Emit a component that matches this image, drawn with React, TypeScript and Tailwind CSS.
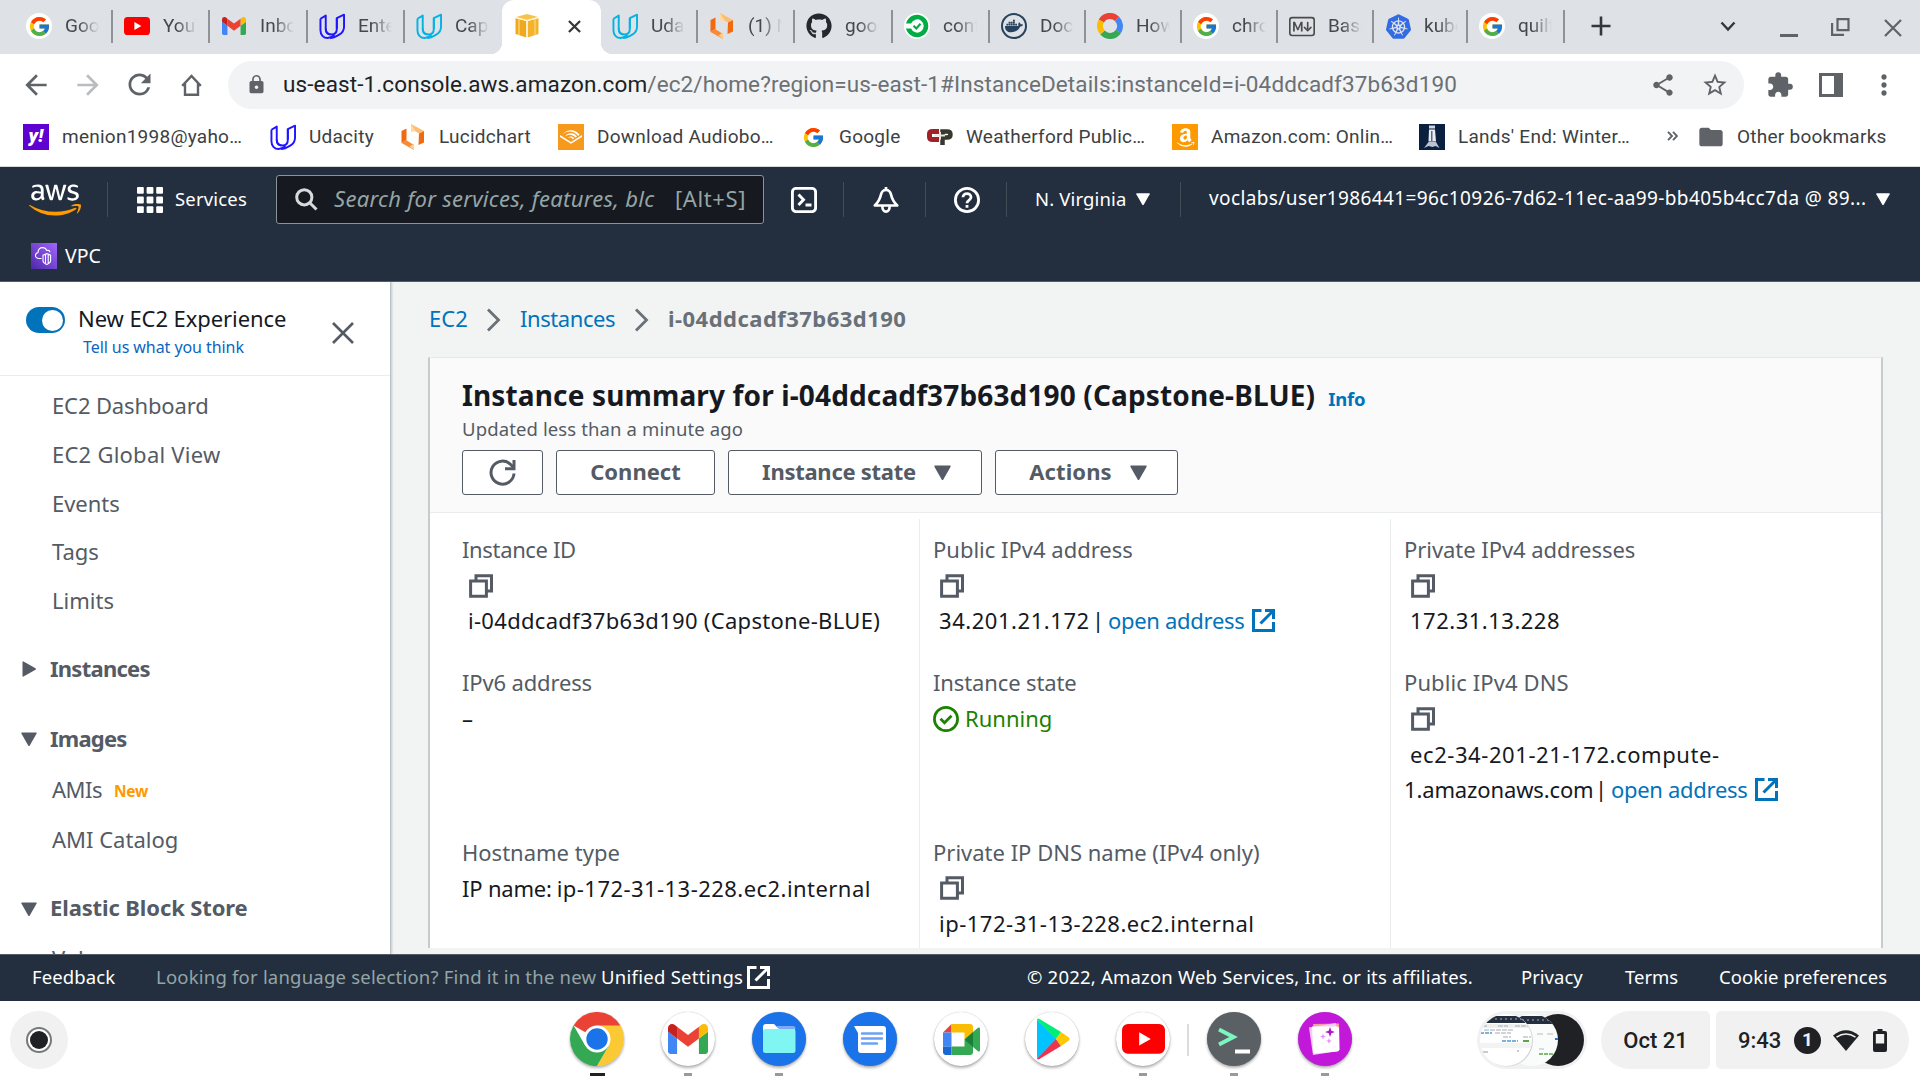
import React, { ReactNode } from "react";
import { FcGoogle } from "react-icons/fc";
import { FaGithub, FaAws, FaDocker, FaAudible, FaAmazon } from "react-icons/fa";
import { MdExtension, MdShare, MdStarBorder, MdLock, MdRefresh, MdArrowBack, MdArrowForward, MdMoreVert, MdFolder } from "react-icons/md";
import { BsMarkdown } from "react-icons/bs";
import { SiKubernetes } from "react-icons/si";

/* ---------- Brand icons ---------- */

function GoogleDisc() {
  return (
    <span className="flex size-[26px] items-center justify-center rounded-full bg-white">
      <FcGoogle size={23} />
    </span>
  );
}

function YouTubeMark({ width }: { width: number }) {
  return (
    <svg width={width} viewBox="0 0 26 18">
      <rect width="26" height="18" rx="3.6" fill="#f00" />
      <path d="M10.4 5v8l7-4z" fill="#fff" />
    </svg>
  );
}

function GmailMark({ width }: { width: number }) {
  return (
    <svg width={width} viewBox="52 42 88 66">
      <path fill="#4285f4" d="M58 108h14V74L52 59v43c0 3.32 2.69 6 6 6" />
      <path fill="#34a853" d="M120 108h14c3.32 0 6-2.69 6-6V59l-20 15" />
      <path fill="#fbbc04" d="M120 48v26l20-15v-8c0-7.42-8.47-11.65-14.4-7.2" />
      <path fill="#ea4335" d="M72 74V48l24 18 24-18v26L96 92" />
      <path fill="#c5221f" d="M52 51v8l20 15V48l-5.6-4.2c-5.94-4.45-14.4-.22-14.4 7.2" />
    </svg>
  );
}

function UdacityMark({ color }: { color: string }) {
  return (
    <svg width="27" height="27" viewBox="0 0 27 27" fill="none" stroke={color} strokeWidth="2" strokeLinejoin="round">
      <path d="M1.5 5.5 7 2.200v13.600c0 3.400 1.800 5.600 4.800 6 M1.500 5.500v12c0 4.600 3 8 7.500 8 2.500 0 5-1.200 7-3.200" />
      <path d="M7 15.500c0 4 2.300 6.300 6 6.300 3.500 0 5.500-2 5.500-6V4.700L26 1.200v12.600c0 4-2 6.500-5 8.200-3 1.800-6 3.500-9.500 3.500" />
      <path d="M18.500 4.700v11" />
    </svg>
  );
}

function LucidMark() {
  return (
    <svg width="26" height="26" viewBox="0 0 26 26">
      <path d="M1.500 7 6.500 4.500V16l-5 3z" fill="#f26a10" />
      <path d="M1.500 19l4.500-3 8 5v5z" fill="#f98a35" />
      <path d="M9.500 22.500 14 19.500V26z" fill="#ffcf8a" />
      <path d="M11 0 24 7l-5 2.500-8-4.500z" fill="#fdbd72" />
      <path d="M11 0v8l4.500-1z" fill="#ffd9a0" />
      <path d="M19 9.500 24 7v11.500L18.500 21z" fill="#f26a10" />
    </svg>
  );
}

function CubeMark() {
  return (
    <svg width="26" height="26" viewBox="0 0 26 26">
      <path d="M2 4 13 1l11 3-11 3z" fill="#f8c24a" />
      <path d="M1.500 5 12.300 8v16.500L1.500 21z" fill="#f0a91f" />
      <path d="M24.500 5 13.700 8v16.500l10.800-3.500z" fill="#f5b32c" />
      <path d="M5 6v16M21 6v16" stroke="#fbd98a" strokeWidth="1.200" />
      <path d="M2 4.600 13 7.700l11-3.100M13 7.700V24" stroke="#fff3d0" strokeWidth="1.200" fill="none" />
    </svg>
  );
}

function CircleCiMark() {
  return (
    <svg width="26" height="26" viewBox="0 0 26 26">
      <circle cx="13" cy="13" r="13" fill="#fff" />
      <path d="M2 10.500A11.300 11.300 0 1 1 2 15.500h5A6.600 6.600 0 1 0 7 10.500z" fill="#00ad45" />
      <path d="M9.500 12.800l2.800 2.700L16.500 10.800" stroke="#00ad45" strokeWidth="2.200" fill="none" />
    </svg>
  );
}

function DockerMark() {
  return (
    <span className="flex size-[26px] items-center justify-center rounded-full border-2 border-[#27425c] bg-[#dee1e6]">
      <FaDocker size={18} color="#27425c" />
    </span>
  );
}

function RingMark() {
  return (
    <svg width="26" height="26" viewBox="0 0 26 26" fill="none" strokeWidth="6">
      <path d="M4.300 8A10 10 0 0 1 20 5.900" stroke="#ea4335" />
      <path d="M20 5.900A10 10 0 0 1 21.500 18.300" stroke="#4285f4" />
      <path d="M21.500 18.300A10 10 0 0 1 5.500 19.600" stroke="#34a853" />
      <path d="M5.500 19.600A10 10 0 0 1 4.300 8" stroke="#fbbc04" />
    </svg>
  );
}

function YahooMark() {
  return (
    <span className="flex size-[26px] items-center justify-center bg-[#5f01d1] pb-1 font-[Roboto] text-[19px] leading-none font-black text-white italic">
      y!
    </span>
  );
}

function CpMark() {
  return (
    <svg width="26" height="18" viewBox="0 0 26 18" fill="none">
      <path d="M12 3.500H5.500Q2.500 3.500 2.500 6v3q0 2.500 3 2.500H12" stroke="#a02126" strokeWidth="5" />
      <path d="M15.500 17V3.500H20q3.500 0 3.500 3t-3.500 3h-4" stroke="#37392f" strokeWidth="4.500" />
      <path d="M7 7.500h11M13 4v7.500" stroke="#e9e4e2" strokeWidth="2" />
    </svg>
  );
}

function LighthouseMark() {
  return (
    <svg width="26" height="26" viewBox="0 0 26 26">
      <rect width="26" height="26" fill="#0b1f3f" />
      <path d="M10 1.500h6v3h-6z" fill="#cfd6df" />
      <path d="M10 5.500h6l1 12H9.500z" fill="#e8ecf1" />
      <path d="M12 7h1.500v10H12z" fill="#5b6b83" />
      <path d="M5 24l4.500-6h7.500l3.500 6-4-2-3 1-4-1z" fill="#b9c3d1" />
    </svg>
  );
}

/* ---------- Console icons ---------- */

function ExternalIcon() {
  return (
    <svg width="23" height="23" viewBox="0 0 23 23" fill="none" stroke="currentColor" strokeWidth="3">
      <path d="M9.500 1.500h-8v20h20v-8.500M13 1.500h8.500V10M21 2 8.500 14.500" />
    </svg>
  );
}

function CopyIcon() {
  return (
    <svg width="24" height="24" viewBox="0 0 24 24" fill="none" stroke="#545b64" strokeWidth="3">
      <path d="M7 6.500V1.800h15.500V17H18" />
      <path d="M1.600 7h15.800v15.200H1.600z" />
    </svg>
  );
}

function Triangle({ className, size = 16 }: { className: string; size?: number }) {
  return (
    <svg className={className} width={size} height={size} viewBox="0 0 16 16" fill="currentColor">
      <path d="M1 1.500h14q1 0 .6 1l-6.800 12q-.8 1-1.600 0L.4 2.500q-.4-1 .6-1z" />
    </svg>
  );
}

function Chevron() {
  return (
    <svg width="15" height="24" viewBox="0 0 15 24" fill="none" stroke="#687078" strokeWidth="2.800">
      <path d="M2 1.500 12.500 12 2 22.500" />
    </svg>
  );
}

/* ---------- Browser chrome ---------- */

const tabs: { icon: ReactNode; label: string; width: string; sep: boolean }[] = [
  { icon: <GoogleDisc />, label: "Google", width: "w-[113px] pl-[26px]", sep: true },
  { icon: <YouTubeMark width={26} />, label: "YouTube", width: "w-[97px] pl-[11px]", sep: true },
  { icon: <GmailMark width={24} />, label: "Inbox", width: "w-[98px] pl-[11px]", sep: true },
  { icon: <UdacityMark color="#2015ff" />, label: "Enterprise", width: "w-[97px] pl-[11px]", sep: true },
  { icon: <UdacityMark color="#02b3e4" />, label: "Capstone", width: "w-[97px] pl-[11px]", sep: false },
];

const tabsAfter: { icon: ReactNode; label: string; width: string }[] = [
  { icon: <UdacityMark color="#02b3e4" />, label: "Udacity", width: "w-[97px]" },
  { icon: <LucidMark />, label: "(1) New", width: "w-[97px]" },
  { icon: <FaGithub size={26} color="#24292f" />, label: "google", width: "w-[98px]" },
  { icon: <CircleCiMark />, label: "config", width: "w-[97px]" },
  { icon: <DockerMark />, label: "Docker", width: "w-[96px]" },
  { icon: <RingMark />, label: "How to", width: "w-[96px]" },
  { icon: <GoogleDisc />, label: "chrome", width: "w-[96px]" },
  { icon: <BsMarkdown size={27} color="#4b4b4b" />, label: "Basic", width: "w-[96px]" },
  { icon: <SiKubernetes size={25} color="#326ce5" />, label: "kubectl", width: "w-[94px]" },
  { icon: <GoogleDisc />, label: "quilt", width: "w-[97px]" },
];

function TabLabel({ text }: { text: string }) {
  return (
    <span className="ml-[13px] w-[34px] shrink-0 overflow-hidden text-[19px] whitespace-nowrap text-[#45494d] [mask-image:linear-gradient(to_right,black_40%,transparent)]">
      {text}
    </span>
  );
}

function TabStrip() {
  return (
    <div className="flex h-[54px] shrink-0 bg-[#dee1e6]">
      {tabs.map((t, i) => (
        <div key={i} className={`flex shrink-0 items-center pb-[2px] ${t.width}`}>
          <span className="flex w-[26px] shrink-0 justify-center">{t.icon}</span>
          <TabLabel text={t.label} />
          {t.sep && <span className="ml-auto h-[33px] w-[2px] bg-[#8f9296]" />}
        </div>
      ))}
      <div className="relative flex w-[99px] shrink-0 items-center rounded-t-xl bg-white pb-[2px] pl-[12px]">
        <span className="absolute bottom-0 -left-3 size-3 bg-[radial-gradient(circle_at_top_left,#dee1e6_12px,white_12.500px)]" />
        <span className="absolute -right-3 bottom-0 size-3 bg-[radial-gradient(circle_at_top_right,#dee1e6_12px,white_12.500px)]" />
        <CubeMark />
        <svg className="ml-[28px]" width="13" height="13" viewBox="0 0 14 14" stroke="#33363a" strokeWidth="2.400">
          <path d="M1 1l12 12M13 1 1 13" />
        </svg>
      </div>
      {tabsAfter.map((t, i) => (
        <div key={i} className={`flex shrink-0 items-center pb-[2px] pl-[11px] ${t.width}`}>
          <span className="flex w-[26px] shrink-0 justify-center">{t.icon}</span>
          <TabLabel text={t.label} />
          <span className="ml-auto h-[33px] w-[2px] bg-[#8f9296]" />
        </div>
      ))}
      <div className="flex flex-1 items-center pb-[2px] pl-[26px]">
        <svg width="20" height="20" viewBox="0 0 20 20" stroke="#33363a" strokeWidth="2.600">
          <path d="M10 0.500v19M0.500 10h19" />
        </svg>
        <svg className="ml-[109px]" width="16" height="11" viewBox="0 0 16 11" fill="none" stroke="#33363a" strokeWidth="2.400">
          <path d="M1.500 1.500 8 8.500l6.500-7" />
        </svg>
        <svg className="mt-[18px] ml-[44px]" width="18" height="3" viewBox="0 0 18 3">
          <path d="M0 1.500h18" stroke="#5f6368" strokeWidth="3" />
        </svg>
        <svg className="mt-[2px] ml-[33px]" width="19" height="18" viewBox="0 0 19 18" fill="none" stroke="#5f6368" strokeWidth="2.200">
          <path d="M6.500 1.100h11v11h-11zM1.100 5v11.800H13" />
        </svg>
        <svg className="mt-[3px] ml-[34px]" width="18" height="18" viewBox="0 0 18 18" stroke="#5f6368" strokeWidth="2.200">
          <path d="M1 1l16 16M17 1 1 17" />
        </svg>
      </div>
    </div>
  );
}

function Toolbar() {
  return (
    <div className="flex h-[61px] shrink-0 items-center pl-[20px]">
      <MdArrowBack size={32} color="#5f6368" />
      <MdArrowForward className="ml-[20px]" size={32} color="#babcbe" />
      <MdRefresh className="ml-[19px]" size={33} color="#5f6368" />
      <svg className="ml-[25px]" width="21" height="22" viewBox="0 0 21 22" fill="none" stroke="#5f6368" strokeWidth="2.400">
        <path d="M1.200 11.800 10.500 2l9.300 9.800M4 9.500v11.200h13V9.500" />
      </svg>
      <div className="ml-[26px] flex h-[48px] w-[1516px] items-center rounded-full bg-[#f1f3f4] pr-[15px] pl-[18px]">
        <MdLock size={21} color="#5f6368" />
        <span className="ml-[16px] text-[22.5px] tracking-[0.12px] whitespace-nowrap text-[#6c7075]">
          <span className="text-[#202124]">us-east-1.console.aws.amazon.com</span>
          /ec2/home?region=us-east-1#InstanceDetails:instanceId=i-04ddcadf37b63d190
        </span>
        <MdShare className="ml-auto" size={26} color="#5f6368" />
        <MdStarBorder className="ml-[25px]" size={28} color="#5f6368" />
      </div>
      <MdExtension className="ml-[22px]" size={28} color="#5f6368" />
      <svg className="ml-[25px]" width="24" height="24" viewBox="0 0 24 24">
        <path fill="#5f6368" fillRule="evenodd" d="M0 0h24v24H0zM3 3v18h12V3z" />
      </svg>
      <MdMoreVert className="ml-[25px]" size={32} color="#5f6368" />
    </div>
  );
}

const bookmarks: { icon: ReactNode; label: string; width: string }[] = [
  { icon: <YahooMark />, label: "menion1998@yaho…", width: "w-[247px]" },
  { icon: <UdacityMark color="#2015ff" />, label: "Udacity", width: "w-[130px]" },
  { icon: <LucidMark />, label: "Lucidchart", width: "w-[158px]" },
  {
    icon: (
      <span className="flex size-[26px] items-center justify-center bg-[#f7991c]">
        <FaAudible size={22} color="#fff" />
      </span>
    ),
    label: "Download Audiobo…",
    width: "w-[242px]",
  },
  { icon: <FcGoogle size={23} />, label: "Google", width: "w-[127px]" },
  { icon: <CpMark />, label: "Weatherford Public…", width: "w-[245px]" },
  {
    icon: (
      <span className="flex size-[26px] items-center justify-center bg-[#ff9900]">
        <FaAmazon size={21} color="#fff" />
      </span>
    ),
    label: "Amazon.com: Onlin…",
    width: "w-[247px]",
  },
  { icon: <LighthouseMark />, label: "Lands' End: Winter…", width: "w-[246px]" },
];

function BookmarksBar() {
  return (
    <div className="flex h-[52px] shrink-0 items-center border-b border-[#d5d8dc] pb-[7px] pl-[23px] text-[19px] tracking-[0.25px] whitespace-nowrap text-[#3c4043]">
      {bookmarks.map((b, i) => (
        <div key={i} className={`flex shrink-0 items-center ${b.width}`}>
          <span className="flex w-[26px] shrink-0 justify-center">{b.icon}</span>
          <span className="mt-px ml-[13px]">{b.label}</span>
        </div>
      ))}
      <svg className="mt-[-3px] ml-[2px]" width="11" height="10" viewBox="0 0 11 10" fill="none" stroke="#5f6368" strokeWidth="1.900">
        <path d="M1 .8 5 5 1 9.200M6 .8 10 5 6 9.200" />
      </svg>
      <MdFolder className="ml-[19px]" size={28} color="#5f6368" />
      <span className="mt-px ml-[12px]">Other bookmarks</span>
    </div>
  );
}

/* ---------- AWS console ---------- */

function HeaderDivider({ className }: { className: string }) {
  return <span className={`h-[35px] w-px shrink-0 bg-[#434b57] ${className}`} />;
}

function AwsHeader() {
  return (
    <div className="h-[115px] shrink-0 border-b border-[#545b64] bg-[#232f3e] font-['Noto_Sans'] text-[18.500px] text-white">
      <div className="flex h-[65px] items-center pl-[29px]">
        <span className="relative mt-[-11px] h-[40px] w-[52px] shrink-0">
          <FaAws className="[clip-path:inset(0_0_43%_0)]" size={52} />
          <FaAws className="absolute top-0 left-0 [clip-path:inset(57%_0_0_0)]" size={52} color="#ff9900" />
        </span>
        <HeaderDivider className="ml-[26px]" />
        <svg className="ml-[29px]" width="26" height="26" viewBox="0 0 26 26" fill="#fff">
          {[0, 9.600, 19.200].map((y) =>
            [0, 9.600, 19.200].map((x) => <rect key={`${x}-${y}`} x={x} y={y} width="6.800" height="6.800" rx="1" />)
          )}
        </svg>
        <span className="mt-[-2px] ml-[12px] w-[73px] tracking-[0.18px]">Services</span>
        <div className="ml-[28px] flex h-[49px] w-[488px] shrink-0 items-center rounded-[3px] border border-[#879596] bg-[#16191f] pl-[18px] text-[22px] whitespace-nowrap text-[#95a5a6]">
          <svg width="23" height="23" viewBox="0 0 23 23" fill="none" stroke="#d5dbdb" strokeWidth="3">
            <circle cx="9.300" cy="9.300" r="7.600" />
            <path d="M14.500 14.500 21.500 21.500" />
          </svg>
          <span className="mt-[-2px] ml-[16px] w-[321px] tracking-[0.27px] italic">Search for services, features, blc</span>
          <span className="mt-[-2px] ml-[20px] tracking-[0.6px]">[Alt+S]</span>
        </div>
        <svg className="ml-[27px]" width="26" height="26" viewBox="0 0 26 26" fill="none" stroke="#fff" strokeWidth="2.900">
          <rect x="1.400" y="1.400" width="23.200" height="23.200" rx="3.500" />
          <path d="M7.500 7.500 12.500 12.800 7.500 18M14.500 18h6" />
        </svg>
        <HeaderDivider className="ml-[26px]" />
        <svg className="ml-[29px]" width="26" height="26" viewBox="0 0 26 26" fill="none" stroke="#fff" strokeWidth="2.700" strokeLinejoin="round">
          <path d="M1.800 18.500C5 15.500 7 12 8 7.500 8.600 4.800 10.500 3 13 3s4.400 1.800 5 4.500c1 4.500 3 8 6.200 11z" />
          <path d="M13 0v3M9.300 19c0 7.500 7.400 7.500 7.400 0" />
        </svg>
        <HeaderDivider className="ml-[26px]" />
        <svg className="ml-[28px]" width="26" height="26" viewBox="0 0 26 26" fill="none" stroke="#fff" strokeWidth="2.800">
          <circle cx="13" cy="13" r="11.600" />
          <path d="M9 10.300c0-5 8-5 8 0 0 3-4 2.500-4 6M13 18v2.800" />
        </svg>
        <HeaderDivider className="ml-[26px]" />
        <span className="mt-[-2px] ml-[28px] w-[93px] tracking-[0.15px] whitespace-nowrap">N. Virginia</span>
        <Triangle className="mt-[-2px] ml-[8px]" size={14} />
        <HeaderDivider className="ml-[30px]" />
        <span className="mt-[-2px] ml-[28px] w-[658px] text-[19px] tracking-[0.39px] whitespace-nowrap">
          voclabs/user1986441=96c10926-7d62-11ec-aa99-bb405b4cc7da @ 89...
        </span>
        <Triangle className="mt-[-2px] ml-[9px]" size={14} />
      </div>
      <div className="flex h-[47px] items-center pt-px pl-[31px]">
        <svg width="26" height="26" viewBox="0 0 26 26" fill="none">
          <defs>
            <linearGradient id="vpc" x1="0" y1="1" x2="1" y2="0">
              <stop stopColor="#4d27a8" />
              <stop offset="1" stopColor="#a166ff" />
            </linearGradient>
          </defs>
          <rect width="26" height="26" fill="url(#vpc)" />
          <g stroke="#fff" strokeWidth="1.100">
            <path d="M10.500 15.500H8c-2 0-3.500-1.200-3.500-3 0-1.600 1-2.600 2.500-3C7 6.500 9 4.600 11.500 4.600c2 0 3.500 1 4.200 2.800 1.700-.6 3 .3 3.200 1.800" />
            <path d="M12 12.200l3.800-1.500 3.800 1.500v5.500c0 1.800-1.500 2.800-3.800 3.800-2.300-1-3.800-2-3.800-3.800zM14.500 12v8M17.200 12v8" />
          </g>
        </svg>
        <span className="ml-[8px] text-[19.500px]">VPC</span>
      </div>
    </div>
  );
}

function SideItem({ label, className = "", badge }: { label: string; className?: string; badge?: string }) {
  return (
    <div className={`flex h-[48.750px] shrink-0 items-center pl-[52px] text-[22px] text-[#545b64] ${className}`}>
      {label}
      {badge && <span className="mt-[4px] ml-[12px] text-[15.500px] font-bold tracking-[-0.3px] text-[#ff9900]">{badge}</span>}
    </div>
  );
}

function SideSection({ label, open, className }: { label: string; open: boolean; className: string }) {
  return (
    <div className={`flex h-[49px] shrink-0 items-center pl-[21px] text-[22px] font-bold text-[#545b64] ${className}`}>
      <Triangle className={open ? "" : "-rotate-90"} />
      <span className="mt-[-2px] ml-[13px]">{label}</span>
    </div>
  );
}

function Sidebar() {
  return (
    <div className="flex w-[391px] shrink-0 flex-col overflow-hidden border-r border-[#bcc3c5] bg-white shadow-[1px_0_2px_rgba(0,28,36,0.2)]">
      <div className="flex h-[94px] shrink-0 border-b border-[#eaeded] pl-[26px]">
        <div className="mt-[25px] flex h-[26px] w-[39px] shrink-0 items-center justify-end rounded-full bg-[#0073bb] pr-[2px]">
          <span className="size-[21px] rounded-full bg-white" />
        </div>
        <div className="ml-[13px] w-[254px] pt-[19px] whitespace-nowrap">
          <div className="h-[35px] text-[22px] leading-[34px] tracking-[-0.07px] text-[#16191f]">New EC2 Experience</div>
          <div className="pl-[5px] text-[16px] leading-[22px] tracking-[-0.07px] text-[#0a66c2]">Tell us what you think</div>
        </div>
        <svg className="mt-[40px] shrink-0" width="22" height="22" viewBox="0 0 22 22" stroke="#545b64" strokeWidth="2.600">
          <path d="M1 1l20 20M21 1 1 21" />
        </svg>
      </div>
      <SideItem label="EC2 Dashboard" className="mt-[5px] tracking-[-0.13px]" />
      <SideItem label="EC2 Global View" className="tracking-[0.24px]" />
      <SideItem label="Events" className="mt-px -mb-px tracking-[-0.02px]" />
      <SideItem label="Tags" />
      <SideItem label="Limits" />
      <SideSection label="Instances" open={false} className="mt-[20px] tracking-[-0.75px]" />
      <SideSection label="Images" open className="mt-[21px] tracking-[-0.8px]" />
      <SideItem label="AMIs" badge="New" className="mt-[1px] tracking-[-0.5px]" />
      <SideItem label="AMI Catalog" className="mt-[2px]" />
      <SideSection label="Elastic Block Store" open className="mt-[20px] tracking-[-0.12px]" />
      <SideItem label="Volumes" className="mt-px" />
    </div>
  );
}

function Label({ children, className = "" }: { children: ReactNode; className?: string }) {
  return <div className={`h-[36px] leading-[34px] ${className} text-[#545b64]`}>{children}</div>;
}

function Line({ children, className = "" }: { children: ReactNode; className?: string }) {
  return <div className={`flex h-[35.200px] items-center whitespace-nowrap ${className}`}>{children}</div>;
}

function CopyLine() {
  return (
    <Line className="pl-[7px]">
      <CopyIcon />
    </Line>
  );
}

function OpenAddress() {
  return (
    <span className="flex items-center gap-[7px] tracking-[-0.3px] text-[#0073bb]">
      open address
      <ExternalIcon />
    </span>
  );
}

function ActionButton({ label, className, menu }: { label: ReactNode; className: string; menu?: boolean }) {
  return (
    <button className={`flex h-[45px] items-center justify-center rounded-[3px] border-[1.500px] border-[#545b64] bg-white text-[22px] font-bold text-[#545b64] ${className}`}>
      <span className="mt-[-2px]">{label}</span>
      {menu && <Triangle className="ml-[18px]" size={17} />}
    </button>
  );
}

function InstanceCard() {
  return (
    <div className="ml-[37px] flex w-[1455px] flex-1 flex-col overflow-hidden border-x-2 border-t border-x-[#c6cbce] border-t-[#e4e8e8] bg-white">
      <div className="h-[155px] shrink-0 border-b border-[#eaeded] bg-[#fafafa] pl-[32px]">
        <div className="flex h-[40px] items-baseline pt-[17px] leading-[40px] whitespace-nowrap">
          <h1 className="text-[28px] font-bold tracking-[0.14px] text-[#16191f]">
            Instance summary for i-04ddcadf37b63d190 (Capstone-BLUE)
          </h1>
          <a className="ml-[13px] text-[18.500px] font-bold tracking-[-0.2px] text-[#0073bb]">Info</a>
        </div>
        <div className="mt-[18px] text-[18.500px] leading-[26px] tracking-[0.12px] text-[#545b64]">Updated less than a minute ago</div>
        <div className="mt-[8px] flex gap-[13px]">
          <ActionButton
            className="w-[81px]"
            label={
              <svg className="mt-[2px]" width="27" height="27" viewBox="0 0 27 27" fill="none" stroke="#545b64" strokeWidth="3">
                <path d="M25 14.500A11.500 11.500 0 1 1 21.700 5.500L24.500 8.500" />
                <path d="M25 1v8.700h-9" />
              </svg>
            }
          />
          <ActionButton className="w-[159px]" label="Connect" />
          <ActionButton className="w-[254px] pl-[3px] tracking-[-0.27px]" label="Instance state" menu />
          <ActionButton className="w-[183px] pl-[3px] tracking-[0.1px]" label="Actions" menu />
        </div>
      </div>
      <div className="mt-[6px] grid flex-1 grid-cols-[490px_471px_1fr] text-[22px] text-[#16191f]">
        <div className="border-r border-[#eaeded] pt-[13px] pl-[32px]">
          <Label className="tracking-[-0.35px]">Instance ID</Label>
          <CopyLine />
          <Line className="pl-[6px] tracking-[0.3px]">i-04ddcadf37b63d190 (Capstone-BLUE)</Line>
          <div className="mt-[27px]">
            <Label className="tracking-[-0.15px]">IPv6 address</Label>
            <Line>–</Line>
          </div>
          <div className="mt-[98px]">
            <Label>Hostname type</Label>
            <Line className="tracking-[0.32px]">
              <span className="tracking-[-0.2px]">IP name:</span>
              <span className="ml-[5px] tracking-[0.45px]">ip-172-31-13-228.ec2.internal</span>
            </Line>
          </div>
        </div>
        <div className="border-r border-[#eaeded] pt-[13px] pl-[13px]">
          <Label>Public IPv4 address</Label>
          <CopyLine />
          <Line className="pl-[6px]">
            <span className="w-[150px] tracking-[0.55px]">34.201.21.172</span>
            <span className="-mt-0.5 ml-[3px] w-[16px]">|</span>
            <OpenAddress />
          </Line>
          <div className="mt-[27px]">
            <Label className="tracking-[-0.12px]">Instance state</Label>
            <Line className="gap-[6px] text-[#1d8102]">
              <svg width="26" height="26" viewBox="0 0 26 26" fill="none" stroke="#1d8102" strokeWidth="2.700">
                <circle cx="13" cy="13" r="11.600" />
                <path d="M7.500 12.800l4 4 7-7" />
              </svg>
              Running
            </Line>
          </div>
          <div className="mt-[98px]">
            <Label>Private IP DNS name (IPv4 only)</Label>
            <CopyLine />
            <Line className="pl-[6px] tracking-[0.5px]">ip-172-31-13-228.ec2.internal</Line>
          </div>
        </div>
        <div className="pt-[13px] pl-[13px]">
          <Label className="tracking-[-0.05px]">Private IPv4 addresses</Label>
          <CopyLine />
          <Line className="pl-[6px] tracking-[0.5px]">172.31.13.228</Line>
          <div className="mt-[27px]">
            <Label className="tracking-[0.1px]">Public IPv4 DNS</Label>
            <CopyLine />
            <Line className="pl-[6px] tracking-[0.58px]">ec2-34-201-21-172.compute-</Line>
            <Line>
              <span className="w-[188px] tracking-[-0.13px]">1.amazonaws.com</span>
              <span className="-mt-0.5 ml-[3px] w-[16px]">|</span>
              <OpenAddress />
            </Line>
          </div>
        </div>
      </div>
    </div>
  );
}

function AwsFooter() {
  return (
    <div className="flex h-[47px] shrink-0 items-center border-t border-[#545b64] bg-[#232f3e] pb-[2px] pl-[32px] font-['Noto_Sans'] text-[18.500px] whitespace-nowrap text-white">
      <span className="w-[84px] tracking-[0.1px]">Feedback</span>
      <span className="ml-[40px] w-[441px] tracking-[0.21px] text-[#95a5a6]">Looking for language selection? Find it in the new</span>
      <span className="ml-[4px] w-[143px] tracking-[0.27px]">Unified Settings</span>
      <span className="mt-px ml-[3px]">
        <ExternalIcon />
      </span>
      <span className="ml-[257px] w-[446px] tracking-[0.2px]">© 2022, Amazon Web Services, Inc. or its affiliates.</span>
      <span className="ml-[48px] w-[63px]">Privacy</span>
      <span className="ml-[41px] w-[54px]">Terms</span>
      <span className="ml-[40px] tracking-[0.05px]">Cookie preferences</span>
    </div>
  );
}

/* ---------- Shelf ---------- */

function ChromeMark() {
  return (
    <svg width="54" height="54" viewBox="0 0 54 54">
      <path d="M27 27 3.600 13.500A27 27 0 0 1 50.400 13.500z" fill="#ea4335" />
      <path d="M27 13.500h23.400A27 27 0 0 1 27 54l11.700-20.200z" fill="#fbc934" />
      <path d="M3.600 13.500A27 27 0 0 0 27 54l11.700-20.200L27 27 15.300 33.800z" fill="#34a853" />
      <circle cx="27" cy="27" r="13.500" fill="#fff" />
      <circle cx="27" cy="27" r="10.700" fill="#1a73e8" />
    </svg>
  );
}

function FilesMark() {
  return (
    <svg width="34" height="30" viewBox="0 0 34 30">
      <path d="M1 3q0-3 3-3h8l4 4h15q2 0 2 3v5H1z" fill="#fff" />
      <path d="M14 2h17q2.500 0 2.500 3H17z" fill="#7fa9f5" />
      <rect x="1" y="5" width="32.500" height="24" rx="2.500" fill="#7ff6f2" />
    </svg>
  );
}

function MessagesMark() {
  return (
    <svg width="32" height="27" viewBox="0 0 32 27">
      <path d="M0 0h29q3 0 3 3v21q0 3-3 3H7q-3 0-3-3V7z" fill="#fff" />
      <path d="M8 7.500h20M8 12.500h20M8 17.500h15" stroke="#6ea1f5" strokeWidth="2.400" strokeLinecap="round" />
    </svg>
  );
}

function MeetMark() {
  return (
    <svg width="37" height="31" viewBox="0 0 37 31">
      <path d="M0 8.500 8.500 0v8.500z" fill="#ea4335" />
      <path d="M8.500 0H27q3 0 3 3v8l-8.500 4.500v-7h-13z" fill="#fbbc04" />
      <path d="M0 8.500h8.500v14H0z" fill="#4285f4" />
      <path d="M0 22.500h8.500V31H3q-3 0-3-3z" fill="#1967d2" />
      <path d="M8.500 22.500h13v-7L30 18v10q0 3-3 3H8.500z" fill="#34a853" />
      <path d="M21.500 15.500 30 8v15z" fill="#188038" />
      <path d="M30 8l5-4.200q2-1 2 1.200v21q0 2.200-2 1.200L30 23z" fill="#34a853" />
    </svg>
  );
}

function PlayMark() {
  return (
    <svg className="ml-[2px]" width="34" height="42" viewBox="0 0 34 42">
      <path d="M1 1.500v39L20.500 21z" fill="#00c3ff" />
      <path d="M1 1.500Q1.500 0 3.500 1L25 14l-5 7z" fill="#00ee76" />
      <path d="M1 40.500Q1.500 42 3.500 41L25 28l-5-7z" fill="#ee334e" />
      <path d="M25 14l7.500 5.300q2 1.700 0 3.400L25 28l-5-7z" fill="#ffc800" />
    </svg>
  );
}

function TerminalMark() {
  return (
    <svg className="mt-[4px]" width="32" height="28" viewBox="0 0 32 28" fill="none" strokeWidth="4">
      <path d="M1 2.500 15.500 10 1 17.500" stroke="#7df5c0" />
      <path d="M17 24.500h15" stroke="#fff" />
    </svg>
  );
}

function GalleryMark() {
  return (
    <svg width="34" height="34" viewBox="0 0 34 34">
      <path d="M5 2 31 1.500 32 28 10 31z" fill="#f2a0a0" />
      <path d="M1 5.500 28 1l3 28L5 33z" fill="#f6c8fb" />
      <path d="M4 4.500h25q2 0 2 2v21q0 2-2 2l-22 2q-2 0-2-2z" fill="#fff" />
      <path d="M22 5l1.300 3.700L27 10l-3.700 1.300L22 15l-1.300-3.700L17 10l3.700-1.300z" fill="#b013c9" />
      <path d="M15 11.500l.8 2.200 2.200.8-2.200.8-.8 2.200-.8-2.200-2.200-.8 2.200-.8zM21 16l.8 2.200 2.200.8-2.200.8-.8 2.200-.8-2.200-2.200-.8 2.200-.8z" fill="#ee8cf5" />
    </svg>
  );
}

const apps: { mark: ReactNode; bg: string; run?: string }[] = [
  { mark: <ChromeMark />, bg: "bg-white", run: "w-[15px] bg-[#202124]" },
  { mark: <GmailMark width={40} />, bg: "bg-white", run: "w-[8px] bg-[#9a9a9a]" },
  { mark: <FilesMark />, bg: "bg-[#1a73e8]", run: "w-[8px] bg-[#9a9a9a]" },
  { mark: <MessagesMark />, bg: "bg-[#1a73e8]" },
  { mark: <MeetMark />, bg: "bg-white" },
  { mark: <PlayMark />, bg: "bg-white" },
  { mark: <YouTubeMark width={43} />, bg: "bg-white", run: "w-[8px] bg-[#9a9a9a]" },
];

const pinned: typeof apps = [
  { mark: <TerminalMark />, bg: "bg-[#5b6064]", run: "w-[8px] bg-[#9a9a9a]" },
  { mark: <GalleryMark />, bg: "bg-[#c218da]", run: "w-[8px] bg-[#9a9a9a]" },
];

function AppIcon({ mark, bg, run }: (typeof apps)[number]) {
  return (
    <div className="flex flex-col items-center">
      <div className={`mt-[11px] flex size-[54px] items-center justify-center rounded-full shadow-[0_2px_3px_rgba(0,0,0,0.3),0_0_1px_rgba(0,0,0,0.3)] ${bg}`}>
        {mark}
      </div>
      {run && <span className={`mt-[7px] h-[3px] ${run}`} />}
    </div>
  );
}

function WindowPreviews() {
  return (
    <svg width="110" height="58" viewBox="0 0 110 58">
      <defs>
        <clipPath id="front">
          <circle cx="29" cy="29" r="26" />
        </clipPath>
        <clipPath id="middle">
          <circle cx="55" cy="29" r="26" />
        </clipPath>
      </defs>
      <rect width="110" height="58" rx="29" fill="#f1f1f1" />
      <circle cx="81" cy="29" r="26" fill="#202124" />
      <g clipPath="url(#middle)">
        <rect x="29" width="52" height="58" fill="#fafbfb" />
        <rect x="29" y="5" width="52" height="8" fill="#232f3e" />
        <path d="M45 9h30" stroke="#aab" strokeWidth="1" strokeDasharray="2 3" />
        <path d="M60 23h6M70 23h6M62 38h5" stroke="#b8bdc2" strokeWidth="1" />
        <path d="M62 43h14" stroke="#58a946" strokeWidth="1.500" strokeDasharray="4 1" />
        <rect x="78" y="27" width="3" height="2" fill="#1a73e8" />
      </g>
      <circle cx="30" cy="29.500" r="26" fill="#cfd2d5" />
      <g clipPath="url(#front)">
        <rect width="58" height="58" fill="#fff" />
        <rect y="5" width="58" height="7" fill="#232f3e" />
        <path d="M18 8h30" stroke="#aab" strokeWidth="1" strokeDasharray="2 3" />
        <rect y="13" width="58" height="4" fill="#eef0f0" />
        <path d="M7 15h3M21 15h10M38 15h14M7 19h30M18 22h16M26 26h8M46 26h8" stroke="#a4abb1" strokeWidth="1" strokeDasharray="5 1" />
        <path d="M3 22h12M25 30h16" stroke="#4f9bd0" strokeWidth="1.500" strokeDasharray="4 1" />
        <path d="M46 30h6" stroke="#58a946" strokeWidth="2" />
        <rect y="32" width="58" height="5" fill="#f2f3f3" />
        <path d="M5 41h6M40 40h2" stroke="#8f979e" strokeWidth="1" />
      </g>
    </svg>
  );
}

function Shelf() {
  return (
    <div className="flex h-[78px] shrink-0 items-start bg-white pl-[10px] text-[22px] font-medium text-[#202124]">
      <div className="mt-[10px] flex size-[58px] items-center justify-center rounded-full bg-[#f1f1f1]">
        <div className="flex size-[26px] items-center justify-center rounded-full border-2 border-[#77797b] bg-white">
          <span className="size-[18px] rounded-full bg-[#202124]" />
        </div>
      </div>
      <div className="ml-[502px] flex gap-[37px]">
        {apps.map((a, i) => (
          <AppIcon key={i} {...a} />
        ))}
      </div>
      <span className="mt-[23px] ml-[17px] h-[32px] w-[2px] bg-[#dadce0]" />
      <div className="ml-[18px] flex gap-[37px]">
        {pinned.map((a, i) => (
          <AppIcon key={i} {...a} />
        ))}
      </div>
      <div className="mt-[10px] ml-[125px]">
        <WindowPreviews />
      </div>
      <div className="mt-[10px] ml-[14px] flex h-[58px] w-[109px] items-center justify-center rounded-l-[29px] rounded-r-[5px] bg-[#f1f1f1]">
        Oct 21
      </div>
      <div className="mt-[10px] ml-[6px] flex h-[58px] w-[193px] items-center rounded-l-[5px] rounded-r-[29px] bg-[#f1f1f1] pl-[22px]">
        <span className="w-[44px]">9:43</span>
        <span className="ml-[12px] flex size-[27px] items-center justify-center rounded-full bg-[#202124] text-[19px] font-bold text-[#f1f1f1]">1</span>
        <svg className="ml-[12px]" width="26" height="21" viewBox="0 0 26 21">
          <path d="M0 5.500Q13-5 26 5.500L13 21z" fill="#202124" />
          <path d="M3.500 7.200Q13 .8 22.500 7.200" stroke="#f1f1f1" strokeWidth="1.600" fill="none" />
        </svg>
        <svg className="ml-[14px]" width="14" height="23" viewBox="0 0 14 23">
          <path fillRule="evenodd" fill="#202124" d="M4.500 0h5v2H12q2 0 2 2v17q0 2-2 2H2q-2 0-2-2V4q0-2 2-2h2.500zM2.800 5v9.500h8.400V5z" />
        </svg>
      </div>
    </div>
  );
}

export default function App() {
  return (
    <div className="flex h-[1079px] w-[1920px] flex-col overflow-hidden bg-white font-[Roboto]">
      <TabStrip />
      <Toolbar />
      <BookmarksBar />
      <AwsHeader />
      <div className="flex min-h-0 flex-1 overflow-hidden bg-[#f2f3f3] font-['Noto_Sans']">
        <Sidebar />
        <div className="flex min-w-0 flex-1 flex-col overflow-hidden pb-[6px]">
          <div className="flex h-[75px] shrink-0 items-center pl-[38px] text-[22px] text-[#0073bb]">
            <span className="mt-[-2px] w-[39px]">EC2</span>
            <span className="ml-[18px]">
              <Chevron />
            </span>
            <span className="mt-[-2px] ml-[19px] w-[96px] tracking-[-0.42px]">Instances</span>
            <span className="ml-[18px]">
              <Chevron />
            </span>
            <span className="mt-[-2px] ml-[19px] font-bold tracking-[0.47px] text-[#687078]">i-04ddcadf37b63d190</span>
          </div>
          <InstanceCard />
        </div>
      </div>
      <AwsFooter />
      <Shelf />
    </div>
  );
}
